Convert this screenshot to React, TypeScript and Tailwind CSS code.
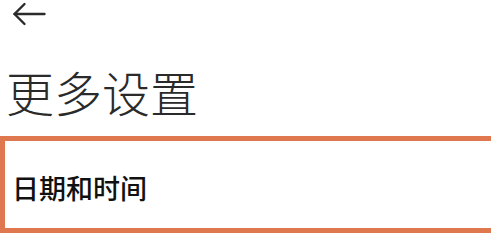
export default function App() {
  return (
    <div className="w-[491px] h-[243px] bg-white overflow-hidden font-['Noto_Sans_CJK_SC',sans-serif]">
      <div className="h-[26px] pl-[12px] pt-[2px]">
        <svg width="34" height="24" viewBox="0 0 34 24" fill="none" stroke="#2b2b2b" strokeWidth="2.4" strokeLinecap="round" strokeLinejoin="round">
          <path d="M2.5 12H32.5" />
          <path d="M12.5 2L2.5 12L12.5 22" />
        </svg>
      </div>
      <div className="h-[110px] pl-[6px] pt-[37px]">
        <h1 className="text-[48px] leading-[56px] font-light text-[#2a2a2a]">更多设置</h1>
      </div>
      <div className="h-[97px] border-t-[5px] border-b-[5px] border-l-[5px] border-r-0 border-solid border-[#e0784f] flex items-center pl-[7px] pt-[8px]">
        <span className="text-[27px] font-medium text-[#111]">日期和时间</span>
      </div>
    </div>
  )
}
